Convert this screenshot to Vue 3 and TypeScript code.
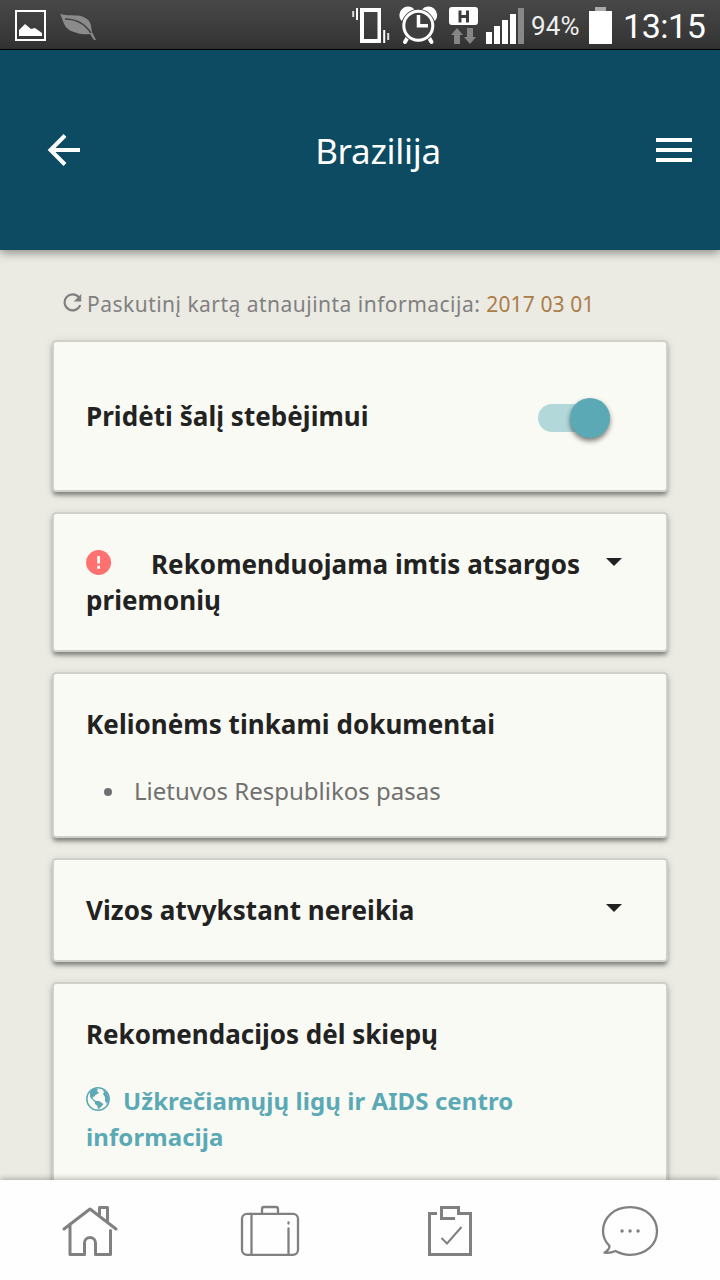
<script setup lang="ts">
import { ref } from 'vue'

const country = 'Brazilija'
const updatedAt = '2017 03 01'
const watching = ref<boolean>(true)
const signalBars: number[] = [12, 18, 24, 30, 36]
</script>

<template>
  <div class="screen">
    <div class="status">
      <svg class="status-left" width="110" height="49" viewBox="0 0 110 49">
        <rect x="16" y="11" width="29" height="29" fill="none" stroke="#fff" stroke-width="2" />
        <path d="M19 36V30L25 24L31 29L35 28L42 33V36Z" fill="#fff" />
        <path d="M60 14C71 17 79 13 87 19C92 23 91 29 92 32L96 40H94L90 34C83 35 73 33 68 29C63 25 63 19 60 14Z" fill="#8b8b8b" />
        <path d="M65 19C76 19 85 24 91 33" fill="none" stroke="#444" stroke-width="1.5" />
      </svg>
      <svg class="status-icons" width="134" height="49" viewBox="0 0 134 49">
        <path d="M8 8H29V43H8ZM12 12V39H25.500V12Z" fill="#fff" fill-rule="evenodd" />
        <path d="M1.200 11V17M36.200 33V40" stroke="#ddd" stroke-width="2" />
        <path d="M5 8V20M32.200 30V43" stroke="#fff" stroke-width="2" />
        <path d="M56.500 36L53 42M76 36L79.500 42" stroke="#fff" stroke-width="4" stroke-linecap="round" />
        <path d="M49.500 21A8 8 0 0 1 62.500 9.500ZM83 21A8 8 0 0 0 70 9.500Z" fill="#fff" />
        <circle cx="66.300" cy="25.800" r="16.800" fill="#404040" />
        <circle cx="66.300" cy="25.800" r="14.500" fill="none" stroke="#fff" stroke-width="3" />
        <path d="M66.500 15V25.700H76" fill="none" stroke="#fff" stroke-width="3.500" />
        <rect x="97" y="7" width="29" height="18" rx="3" fill="#fff" />
        <path d="M108 10.500V22.500M115.500 10.500V22.500M108 16.500H115.500" stroke="#3d3d3d" stroke-width="3" />
        <path d="M105 28L111 35H108V44H102V35H99Z M118 44L112 37H115V28H121V37H124Z" fill="#858585" />
      </svg>
      <div class="signal">
        <i v-for="(h, n) in signalBars" :key="n" :class="{ weak: n === 4 }" :style="{ height: h + 'px' }"></i>
      </div>
      <span class="percent">94%</span>
      <div class="battery"></div>
      <span class="clock">13:15</span>
    </div>

    <header class="bar">
      <button class="back" aria-label="Atgal">
        <svg width="34" height="34" viewBox="0 0 34 34">
          <path d="M18 2.500L3.500 17L18 31.500M3.500 17H33" fill="none" stroke="#fff" stroke-width="4" />
        </svg>
      </button>
      <h1>{{ country }}</h1>
      <button class="menu" aria-label="Meniu"><i></i><i></i><i></i></button>
    </header>

    <main>
      <p class="updated">
        <svg width="20" height="20" viewBox="0 0 20 20">
          <path d="M17.200 12A8 8 0 1 1 16 4.500" fill="none" stroke="#808080" stroke-width="2.200" />
          <path d="M18.200 1V8.500H10.700Z" fill="#808080" />
        </svg>
        <span class="updated-label">Paskutinį kartą atnaujinta informacija:</span>
        <span class="date">{{ updatedAt }}</span>
      </p>

      <section class="card watch">
        <h2>Pridėti šalį stebėjimui</h2>
        <button class="toggle" :class="{ on: watching }" aria-label="Stebėti" @click="watching = !watching"><i></i></button>
      </section>

      <section class="card row">
        <h2>
          <svg class="alert" width="26" height="26" viewBox="0 0 26 26">
            <circle cx="12.600" cy="13.500" r="12.500" fill="#ff7070" />
            <path d="M12.600 7V14.500M12.600 16.800V19.800" stroke="#fafaf4" stroke-width="2.800" />
          </svg>Rekomenduojama imtis atsargos<br />priemonių
        </h2>
        <i class="caret"></i>
      </section>

      <section class="card">
        <h2>Kelionėms tinkami dokumentai</h2>
        <ul>
          <li>Lietuvos Respublikos pasas</li>
        </ul>
      </section>

      <section class="card row">
        <h2>Vizos atvykstant nereikia</h2>
        <i class="caret"></i>
      </section>

      <section class="card">
        <h2 class="plain">Rekomendacijos dėl skiepų</h2>
        <a class="link">
          <svg class="globe" width="24" height="24" viewBox="0 0 24 24">
            <circle cx="12" cy="12" r="11.200" fill="none" stroke="#5ba9b5" stroke-width="1.500" />
            <path d="M4 5L8 1.500L12 2L11 4L13 6L9.500 8L8 10L6.500 9.500L7 12L10 14L8.500 15L4 10Z" fill="#5ba9b5" />
            <path d="M9 14L13 14L17.500 17L15 20L12 22.500L11.500 19L9 17Z" fill="#5ba9b5" />
            <path d="M16 2L21 6L23 12L21 17L19 14V10L17 7L18 5Z" fill="#5ba9b5" />
          </svg>Užkrečiamųjų ligų ir AIDS centro<br />informacija
        </a>
      </section>
    </main>

    <nav class="tabs">
      <svg width="60" height="56" viewBox="60 1204 60 56">
        <path d="M64 1229L90 1209L116 1229M70 1224V1254.500H84.500V1243A5.500 5.500 0 0 1 95.500 1243V1254.500H110.500V1230.500M99.500 1214.500V1207.500H107.500V1221" />
      </svg>
      <svg class="thin" width="60" height="56" viewBox="240 1204 60 56">
        <rect x="242" y="1213.800" width="56" height="41" rx="5" />
        <path d="M262 1213V1209A2 2 0 0 1 264 1207H276A2 2 0 0 1 278 1209V1213M251.500 1214V1254M288.500 1228.500V1254M288.500 1222.500V1223.500" />
      </svg>
      <svg class="square" width="60" height="56" viewBox="420 1204 60 56">
        <path d="M437 1213.500H429.500V1254.500H470.500V1213.500H458.500V1207.500H441.500V1218.500H455" />
        <path d="M441.500 1238L447 1243.500L461.500 1227" stroke-width="2" />
      </svg>
      <svg width="60" height="56" viewBox="600 1204 60 56" class="thin">
        <path d="M609.500 1246C605 1241.500 603 1237 603 1231C603 1217.500 614 1207.200 630 1207.200S657 1217.500 657 1231S646 1254.800 630 1254.800C624.500 1254.800 620 1253.500 615.500 1251C611.500 1252.800 608 1253 604.500 1252.700C608 1250.500 609.500 1248.500 609.500 1246Z" />
        <path class="dots" d="M622 1231H622.100M630 1231H630.100M638 1231H638.100" />
      </svg>
    </nav>
  </div>
</template>

<style>
body {
  margin: 0;
  overflow: hidden;
}
</style>

<style scoped>
.screen {
  width: 720px;
  height: 1280px;
  display: flex;
  flex-direction: column;
  overflow: hidden;
  background: #ebebe4;
  font-family: "Noto Sans", sans-serif;
}
.status {
  flex: none;
  height: 49px;
  display: flex;
  border-bottom: 1px solid #000;
  background: linear-gradient(#484848, #333);
  color: #fff;
  font-family: Roboto, sans-serif;
}
.status svg { flex: none; }
.status-icons { margin-left: 242px; }
.signal {
  display: flex;
  align-items: flex-end;
  gap: 2px;
  height: 44px;
  flex: none;
}
.signal i { width: 6px; background: #fff; }
.signal .weak { background: #888; }
.percent {
  width: 58px;
  margin-left: 7px;
  font-size: 26px;
  line-height: 53px;
  letter-spacing: .1px;
  color: #eee;
  white-space: nowrap;
}
.battery {
  width: 23px;
  height: 33px;
  margin-top: 11px;
  background: #fff;
  position: relative;
}
.battery::before {
  content: "";
  position: absolute;
  left: 6px;
  top: -4px;
  width: 11px;
  height: 4px;
  background: #aaa;
}
.clock {
  margin-left: 11px;
  font-size: 34px;
  line-height: 52px;
  letter-spacing: -.45px;
  white-space: nowrap;
}
.bar {
  flex: none;
  height: 200px;
  display: flex;
  align-items: center;
  background: #0c4b61;
  position: relative;
  z-index: 1;
  box-shadow: 0 3px 9px rgba(0, 0, 0, .4);
}
button { border: 0; padding: 0; background: none; }
.back { width: 34px; height: 34px; margin-left: 47px; }
.back svg { display: block; }
h1 {
  flex: 1;
  margin: 0 0 0 19px;
  text-align: center;
  color: #fff;
  font-size: 35px;
  letter-spacing: -.3px;
  font-weight: 400;
}
.menu {
  width: 36px;
  margin-right: 28px;
  display: grid;
  gap: 6px;
}
.menu i { height: 4px; background: #fff; }
main {
  flex: 1;
  min-height: 0;
  overflow: hidden;
  padding: 0 52px;
}
.updated {
  display: flex;
  height: 36px;
  margin: 36px 0 18px 11px;
  color: #808080;
  font-size: 21px;
  line-height: 37px;
  white-space: nowrap;
}
.updated svg { margin: 7px 4px 0 0; flex: none; }
.updated-label { letter-spacing: .48px; }
.date { margin-left: 6px; letter-spacing: .12px; color: #ab7c48; }
.card {
  box-sizing: border-box;
  margin-bottom: 20px;
  padding: 32px 32px 28px;
  border: 2px solid #d0d0ca;
  border-radius: 4px;
  background: #fafaf4;
  box-shadow: 0 4px 4px -1px rgba(0, 0, 0, .42), 0 2px 10px rgba(0, 0, 0, .12);
}
.watch {
  display: flex;
  justify-content: space-between;
  height: 152px;
  padding: 56px 56px 0 32px;
}
.row {
  display: flex;
  justify-content: space-between;
  padding-bottom: 32px;
}
h2 {
  margin: 0;
  color: #222;
  font-size: 26px;
  font-weight: 700;
  line-height: 36px;
  letter-spacing: .045px;
  white-space: nowrap;
}
h2.plain { letter-spacing: 0; }
.alert { height: 26px; margin-right: 39px; vertical-align: -1px; }
.caret {
  width: 0;
  height: 0;
  margin: 12px 12px 0 0;
  border: 8px solid transparent;
  border-top-color: #222;
  border-bottom: 0;
}
.toggle {
  width: 72px;
  height: 28px;
  margin-top: 6px;
  border-radius: 14px;
  background: #ccc;
  display: flex;
  align-items: center;
}
.toggle i {
  width: 40px;
  height: 40px;
  flex: none;
  border-radius: 50%;
  background: #fff;
  box-shadow: 0 3px 5px rgba(0, 0, 0, .5);
}
.toggle.on { background: #b2d8da; justify-content: flex-end; }
.toggle.on i { background: #5ba9b5; }
ul {
  margin: 30px 0 0;
  padding: 0;
  list-style: none;
}
li {
  display: flex;
  align-items: center;
  height: 36px;
  color: #707070;
  font-size: 24px;
}
li::before {
  content: "";
  width: 8px;
  height: 8px;
  margin: 4px 22px 0 18px;
  border-radius: 50%;
  background: #707070;
}
.link {
  display: block;
  margin-top: 31px;
  color: #5ba9b5;
  font-size: 24px;
  font-weight: 700;
  line-height: 36px;
  letter-spacing: .08px;
  white-space: nowrap;
}
.globe { height: 24px; margin-right: 13px; vertical-align: -1px; }
.tabs {
  flex: none;
  height: 100px;
  display: grid;
  grid-template-columns: repeat(4, 60px);
  justify-content: space-between;
  align-items: start;
  box-sizing: border-box;
  padding: 24px 60px 0;
  background: #fefefe;
  position: relative;
  box-shadow: 0 -1px 6px rgba(0, 0, 0, .3);
}
.tabs svg {
  fill: none;
  stroke: #808080;
  stroke-width: 3;
  stroke-linecap: round;
  stroke-linejoin: round;
}
.tabs .thin { stroke-width: 2.300; }
.tabs .square { stroke-linecap: butt; stroke-linejoin: miter; }
.tabs .dots { stroke-width: 3.400; }
</style>
